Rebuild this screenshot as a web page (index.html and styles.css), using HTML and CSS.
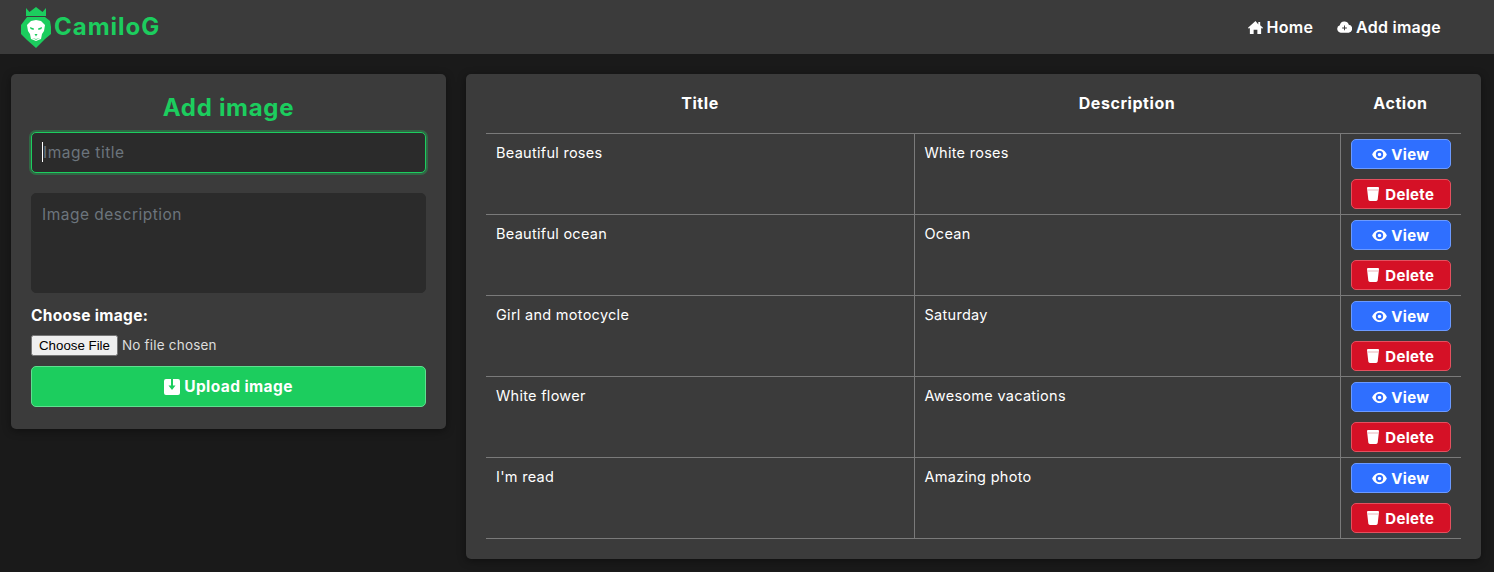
FILE: index.html
```html
<!DOCTYPE html>
<html lang="en">
<head>
    <meta charset="UTF-8">
    <meta name="viewport" content="width=device-width, initial-scale=1.0">
    <title>CamiloG - Add image</title>
    <link rel="stylesheet" href="styles.css">
</head>
<body>
    <header>
        <nav class="navbar">
            <a class="logo" href="#">
                <svg class="logo-icon" viewBox="0 0 32 41" width="32" height="41">
                    <path fill="#1ccd5e" d="M6 1l3.500 4L16 0l6.500 5L26 1v8H6z"/>
                    <path fill="#1ccd5e" d="M7 10h18l5 4 1 6v7l-6 5-9 9-9-8-6-6v-9z"/>
                    <path fill="#fff" d="M16 13l5 1 4 4-1 6-2 3-1 5-5 2-5-2-1-5-2-3-1-6 4-4z"/>
                    <path fill="#1ccd5e" d="M10 20l4 1.500-.5 1.500-3-1zM22 20l-4 1.500.5 1.500 3-1zM14.500 27h3L16 29.500zM12 31l4 1 4-1-4 1.800z"/>
                </svg>
                <span>CamiloG</span>
            </a>
            <ul class="nav-links">
                <li><a href="#">
                    <svg class="icon" viewBox="0 0 16 16" width="15" height="15"><path fill="#fff" d="M8 1L0 8.200l1 1 1-.9V15h4v-4.500h4V15h4V8.300l1 .9 1-1-3-2.700V2h-2v2.700z"/></svg>
                    Home</a></li>
                <li><a href="#">
                    <svg class="icon" viewBox="0 0 16 12" width="15" height="12"><path fill="#fff" d="M4 12a4 4 0 0 1-1-7.800A5 5 0 0 1 12.600 3.500 4.300 4.300 0 0 1 12.500 12z"/><path fill="#3b3b3b" d="M7.500 4.500h1v2h2v1h-2v2h-1v-2h-2v-1h2z"/></svg>
                    Add image</a></li>
            </ul>
        </nav>
    </header>

    <main class="content">
        <section class="card form-card">
            <h1>Add image</h1>
            <form class="image-form">
                <div class="title-wrap">
                    <input class="field field-title" type="text" placeholder="Image title" autofocus>
                    <span class="caret"></span>
                </div>
                <textarea class="field field-area" placeholder="Image description"></textarea>
                <label class="file-label" for="image">Choose image:</label>
                <input class="file-input" id="image" type="file">
                <button class="btn btn-upload" type="button">
                    <svg class="icon" viewBox="0 0 16 16" width="16" height="16"><path fill="#fff" fill-rule="evenodd" d="M2 0h12a2 2 0 0 1 2 2v12a2 2 0 0 1-2 2H2a2 2 0 0 1-2-2V2a2 2 0 0 1 2-2zM7 0v6.500H4.500L8 11l3.500-4.500H9V0z"/></svg>
                    Upload image</button>
            </form>
        </section>

        <section class="card table-card">
            <table>
                <thead>
                    <tr><th>Title</th><th>Description</th><th>Action</th></tr>
                </thead>
                <tbody id="rows"></tbody>
            </table>
        </section>
    </main>

    <script>
        const images = [
            ['Beautiful roses', 'White roses'],
            ['Beautiful ocean', 'Ocean'],
            ['Girl and motocycle', 'Saturday'],
            ['White flower', 'Awesome vacations'],
            ["I'm read", 'Amazing photo']
        ];
        const eye = '<svg class="icon" viewBox="0 0 16 12" width="15" height="11"><path fill="#fff" fill-rule="evenodd" d="M8 0c3.800 0 6.800 3 8 6-1.200 3-4.200 6-8 6S1.200 9 0 6c1.200-3 4.200-6 8-6zm0 2a4 4 0 1 0 0 8 4 4 0 0 0 0-8zM8 4a2 2 0 1 1 0 4 2 2 0 0 1 0-4z"/></svg>';
        const cup = '<svg class="icon" viewBox="0 0 12 14" width="12" height="14"><path fill="#fff" d="M1 0h10a1 1 0 0 1 1 1l-1.300 11.500A1.700 1.700 0 0 1 9 14H3a1.700 1.700 0 0 1-1.700-1.500L0 1a1 1 0 0 1 1-1z"/><path fill="#e9b4ba" d="M.3 2.500h11.400l-.1 1H.4z"/></svg>';
        const rows = document.getElementById('rows');
        images.forEach(item => {
            const row = document.createElement('tr');
            row.innerHTML = `
                <td>${item[0]}</td>
                <td>${item[1]}</td>
                <td class="actions">
                    <button class="btn btn-view" type="button">${eye} View</button>
                    <button class="btn btn-delete" type="button">${cup} Delete</button>
                </td>`;
            rows.appendChild(row);
        });
    </script>
</body>
</html>
```

FILE: styles.css
```css
* {
    box-sizing: border-box;
}
body {
    margin: 0;
    background-color: #1a1a1a;
    color: #fff;
    font-family: Inter, "DejaVu Sans", sans-serif;
    font-size: 14.5px;
    letter-spacing: 0.28px;
    line-height: 1.5;
}
a {
    color: inherit;
    text-decoration: none;
}
.navbar {
    height: 54px;
    background-color: #3b3b3b;
    display: flex;
    justify-content: space-between;
    align-items: center;
    padding: 0 53px 0 20px;
}
.logo {
    display: flex;
    align-items: center;
    gap: 2px;
    color: #1ccd5e;
    font-size: 24px;
    letter-spacing: 1px;
    font-weight: 700;
}
.nav-links {
    list-style: none;
    margin: 0;
    padding: 0;
    display: flex;
    gap: 24px;
    font-size: 16px;
    letter-spacing: 0.25px;
    font-weight: 600;
}
.nav-links a {
    display: flex;
    align-items: center;
    gap: 4px;
}
.content {
    display: flex;
    align-items: flex-start;
    gap: 20px;
    padding: 20px 13px 13px 11px;
}
.card {
    background-color: #3b3b3b;
    border-radius: 5px;
    padding: 20px;
    box-shadow: 0 2px 8px rgba(0, 0, 0, 0.4);
}
.form-card {
    width: 435px;
    flex-shrink: 0;
    padding-top: 16px;
    padding-bottom: 22px;
}
.form-card h1 {
    margin: 0 0 6px;
    color: #1ccd5e;
    font-size: 24px;
    letter-spacing: 0.7px;
    line-height: 36px;
    font-weight: 700;
    text-align: center;
}
.image-form {
    display: flex;
    flex-direction: column;
}
.field {
    display: block;
    width: 100%;
    background-color: #2b2b2b;
    border: 1px solid #2b2b2b;
    border-radius: 5px;
    padding: 10px;
    color: #fff;
    caret-color: #fff;
    font-family: inherit;
    font-size: 15.5px;
    letter-spacing: 0.5px;
    line-height: 21px;
    outline: none;
    resize: none;
}
.field::placeholder {
    color: #6c757d;
}
.field:focus {
    border-color: #1ccd5e;
    box-shadow: 0 0 0 2px rgba(28, 205, 94, 0.3);
}
.title-wrap {
    position: relative;
    margin-bottom: 20px;
}
.field-title {
    height: 41px;
    padding-left: 11px;
}
.caret {
    position: absolute;
    left: 11px;
    top: 10px;
    width: 1px;
    height: 20px;
    background-color: #fff;
}
.field-area {
    height: 100px;
    margin-bottom: 12px;
}
.file-label {
    font-size: 15.5px;
    letter-spacing: 0.3px;
    font-weight: 700;
    line-height: 22px;
    margin-bottom: 8px;
}
.file-input {
    font-family: inherit;
    font-size: 13.5px;
    letter-spacing: 0.2px;
    color: #ddd;
    margin-bottom: 10px;
}
.file-input::file-selector-button {
    font-family: "Liberation Sans", sans-serif;
    font-size: 13.3px;
    letter-spacing: normal;
}
.btn {
    display: flex;
    justify-content: center;
    align-items: center;
    gap: 4px;
    width: 100%;
    padding: 1px 0 0;
    border-radius: 5px;
    color: #fff;
    font-family: inherit;
    font-size: 15px;
    letter-spacing: 0.3px;
    font-weight: 700;
    cursor: pointer;
}
.btn-upload {
    height: 41px;
    padding: 0;
    background-color: #1ccd5e;
    border: 1px solid #5fe08f;
    font-size: 15.5px;
    letter-spacing: 0.4px;
}
.btn-view {
    height: 30px;
    background-color: #2f6fff;
    border: 1px solid #6c9aff;
}
.btn-delete {
    height: 30px;
    gap: 6px;
    margin-top: 10px;
    background-color: #d51126;
    border: 1px solid #e4505f;
}
.table-card {
    flex: 1;
    padding-top: 0;
}
table {
    width: 100%;
    border-collapse: collapse;
    table-layout: fixed;
}
th {
    height: 59px;
    font-size: 16px;
    letter-spacing: 0.55px;
    font-weight: 700;
    text-align: center;
    border-bottom: 1px solid #7a7a7a;
}
th:first-child {
    width: 428px;
}
th:last-child {
    width: 121px;
}
td {
    height: 81px;
    padding: 8px 10px;
    vertical-align: top;
    border-bottom: 1px solid #7a7a7a;
}
td + td {
    border-left: 1px solid #7a7a7a;
}
td.actions {
    padding: 5px 10px;
}
```
